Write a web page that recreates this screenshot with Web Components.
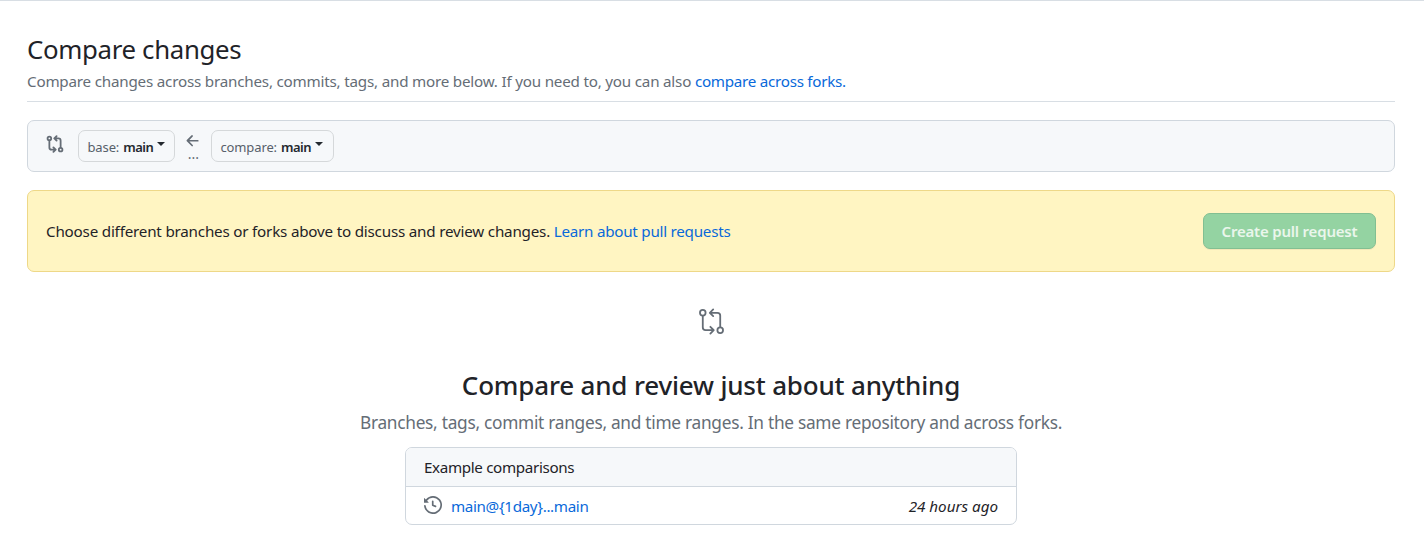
<!DOCTYPE html>
<html lang="en">
<head>
<meta charset="utf-8">
<title>Compare changes</title>
<style>
body{margin:0;background:#fff;color:#1f2328;font:15.2px/24px "Noto Sans","Open Sans",sans-serif}
</style>
</head>
<body>
<compare-page></compare-page>
<script>
const define=(name,css,html)=>customElements.define(name,class extends HTMLElement{
  constructor(){super();this.attachShadow({mode:"open"}).innerHTML="<style>*,:host{box-sizing:border-box}"+css+"</style>"+html}
});
const compareIcon=`<svg viewBox="0 0 24 24" fill="none" stroke="currentColor" stroke-width="1.6" stroke-linecap="round" stroke-linejoin="round"><circle cx="4.25" cy="4.25" r="2.5"/><circle cx="19.75" cy="19.75" r="2.5"/><path d="M4.25 7v10.2a2.5 2.5 0 0 0 2.5 2.5h6.5M11 16.7l3 3-3 3M19.75 17V6.75a2.5 2.5 0 0 0-2.5-2.5h-6.5M13.5 1.25l-3 3 3 3"/></svg>`;
const compareSmall=`<svg viewBox="0 0 16 16" fill="none" stroke="currentColor" stroke-width="1.6" stroke-linecap="round" stroke-linejoin="round"><circle cx="3" cy="3" r="1.6"/><circle cx="13" cy="13" r="1.6"/><path d="M3 5v6a2 2 0 0 0 2 2H8M6.6 11l2 2-2 2M13 11V5a2 2 0 0 0-2-2H8M9.4 1l-2 2 2 2"/></svg>`;
define("text-link",`:host{color:#0969da}`,`<slot></slot>`);
define("page-head",`:host{display:block;height:70px;border-bottom:1px solid #d8dee4}
h1{margin:0;font-size:25.8px;font-weight:400;line-height:36px;letter-spacing:-.33px}
p{margin:2px 0 0;color:#656d76;line-height:24px;letter-spacing:-.205px;white-space:nowrap}
::slotted(text-link){letter-spacing:-.27px}`,
`<h1><slot name="title"></slot></h1><p><slot></slot></p>`);
define("branch-select",`:host{display:flex;align-items:center;height:32px;padding:1px 0 0 8.5px;border:1px solid #d5d8da;border-radius:7px;background:#f6f8fa;font-size:13px;letter-spacing:-.13px;color:#57606a;white-space:nowrap}
b{font-weight:600;color:#24292f;margin-left:4px;letter-spacing:-.5px}
i{border:4.5px solid transparent;border-top-color:#24292f;border-bottom:0;margin:-6px 0 0 4px}`,
`<span><slot name="kind"></slot></span><b><slot></slot></b><i></i>`);
define("range-editor",`:host{display:flex;align-items:center;height:52px;margin-top:18px;padding:0 18px;border:1px solid #d0d7de;border-radius:7px;background:#f6f8fa;color:#656d76}
svg{width:18px;height:18px;display:block}
.cmp{margin:-4px 14px 0 0}
.arrow{width:18px;margin:0 9px;height:34px;display:flex;flex-direction:column;font-size:14px;line-height:14px;align-items:center}
.arrow svg{margin-top:3px}
.arrow span{margin:-3px 0 0 1px}
slot[name=base]::slotted(*){width:97px}
slot[name=head]::slotted(*){width:123px}`,
`<div class="cmp">${compareSmall}</div><slot name="base"></slot><div class="arrow"><svg viewBox="0 0 16 16" fill="currentColor"><path d="M7.78 12.53a.75.75 0 0 1-1.06 0L2.47 8.28a.75.75 0 0 1 0-1.06l4.25-4.25a.751.751 0 0 1 1.06 1.06L4.81 7h7.44a.75.75 0 0 1 0 1.5H4.81l2.97 2.97a.75.75 0 0 1 0 1.06Z"/></svg><span>...</span></div><slot name="head"></slot>`);
define("primary-button",`:host{display:flex;align-items:center;justify-content:center;width:173px;height:36px;border:1px solid #82bf92;border-radius:7px;background:#94d3a2;color:#eaf6ec;font-size:15px;font-weight:600;letter-spacing:-.2px;box-shadow:0 1px 0 rgba(31,35,40,.06);white-space:nowrap}`,`<slot></slot>`);
define("flash-notice",`:host{display:flex;align-items:center;justify-content:space-between;height:82px;margin-top:18px;padding:0 18px;border:1px solid #eed888;border-radius:7px;background:#fff5c2;letter-spacing:-.2px}
slot:not([name])::slotted(text-link){letter-spacing:-.25px}`,
`<span><slot></slot></span><slot name="action"></slot>`);
define("comparison-list",`:host{display:block;width:612px;height:78px;margin:0 auto;border:1px solid #d0d7de;border-radius:7px;overflow:hidden;text-align:left;letter-spacing:-.35px}
header,div{display:flex;align-items:center;padding:0 18px}
header{height:39px;background:#f6f8fa;border-bottom:1px solid #d0d7de}
div{height:38px}
svg{width:18px;height:18px;margin:-3px 9px 0 0;color:#656d76}
em{margin-left:auto;letter-spacing:0}`,
`<header><slot name="title"></slot></header><div><svg viewBox="0 0 16 16" fill="currentColor"><path d="m.427 1.927 1.215 1.215a8.002 8.002 0 1 1-1.6 5.685.75.75 0 1 1 1.493-.154 6.5 6.5 0 1 0 1.18-4.458l1.358 1.358A.25.25 0 0 1 3.896 6H.25A.25.25 0 0 1 0 5.75V2.104a.25.25 0 0 1 .427-.177ZM7.75 4a.75.75 0 0 1 .75.75v2.992l2.028.812a.75.75 0 0 1-.557 1.392l-2.5-1A.751.751 0 0 1 7 8.25v-3.5A.75.75 0 0 1 7.75 4Z"/></svg><slot name="range"></slot><em><slot name="age"></slot></em></div>`);
define("blank-slate",`:host{display:block;padding-top:36px;text-align:center}
svg{display:block;width:27px;height:27px;margin:0 auto;color:#656d76}
h3{margin:32px 0 0;font-size:26px;font-weight:500;line-height:36px;letter-spacing:-.18px}
p{margin:6px 0 11px;font-size:17.3px;line-height:27px;letter-spacing:-.28px;color:#656d76;white-space:nowrap}`,
`${compareIcon}<h3><slot name="title"></slot></h3><p><slot></slot></p><slot name="list"></slot>`);
define("compare-page",`:host{display:block;height:558px;border-top:1px solid #d8dee4;padding:30px 29px 0 27px;overflow:hidden}
page-head{height:71px}`,
`<page-head><span slot="title">Compare changes</span>Compare changes across branches, commits, tags, and more below. If you need to, you can also <text-link>compare across forks.</text-link></page-head>
<range-editor><branch-select slot="base"><span slot="kind">base:</span>main</branch-select><branch-select slot="head"><span slot="kind">compare:</span>main</branch-select></range-editor>
<flash-notice>Choose different branches or forks above to discuss and review changes. <text-link>Learn about pull requests</text-link><primary-button slot="action">Create pull request</primary-button></flash-notice>
<blank-slate><span slot="title">Compare and review just about anything</span>Branches, tags, commit ranges, and time ranges. In the same repository and across forks.
<comparison-list slot="list"><span slot="title">Example comparisons</span><text-link slot="range">main@{1day}...main</text-link><span slot="age">24 hours ago</span></comparison-list></blank-slate>`);
</script>
</body>
</html>
